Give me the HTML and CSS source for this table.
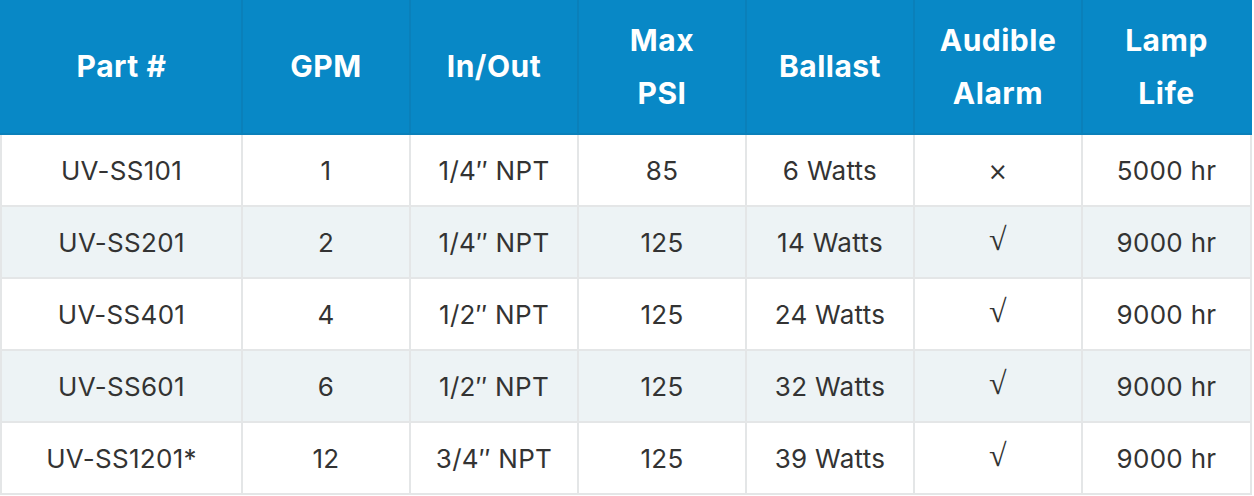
FILE: index.html
```html
<!DOCTYPE html>
<html>
<head>
<meta charset="utf-8">
<link rel="stylesheet" href="styles.css">
</head>
<body>
<table class="spec">
  <colgroup>
    <col class="c-first"><col class="c"><col class="c"><col class="c"><col class="c"><col class="c"><col class="c-last">
  </colgroup>
  <thead>
    <tr>
      <th>Part #</th>
      <th>GPM</th>
      <th>In/Out</th>
      <th>Max<br>PSI</th>
      <th>Ballast</th>
      <th>Audible<br>Alarm</th>
      <th>Lamp<br>Life</th>
    </tr>
  </thead>
  <tbody>
    <tr><td>UV-SS101</td><td>1</td><td>1/4″ NPT</td><td>85</td><td>6 Watts</td><td><span class="cross">×</span></td><td>5000 hr</td></tr>
    <tr><td>UV-SS201</td><td>2</td><td>1/4″ NPT</td><td>125</td><td>14 Watts</td><td><span class="check">√</span></td><td>9000 hr</td></tr>
    <tr><td>UV-SS401</td><td>4</td><td>1/2″ NPT</td><td>125</td><td>24 Watts</td><td><span class="check">√</span></td><td>9000 hr</td></tr>
    <tr><td>UV-SS601</td><td>6</td><td>1/2″ NPT</td><td>125</td><td>32 Watts</td><td><span class="check">√</span></td><td>9000 hr</td></tr>
    <tr><td>UV-SS1201*</td><td>12</td><td>3/4″ NPT</td><td>125</td><td>39 Watts</td><td><span class="check">√</span></td><td>9000 hr</td></tr>
  </tbody>
</table>
</body>
</html>
```
FILE: styles.css
```css
html, body {
  margin: 0;
  padding: 0;
  background: #ffffff;
}
.spec {
  border-collapse: collapse;
  table-layout: fixed;
  width: 1252px;
  font-family: Inter, "Noto Sans", sans-serif;
  color: #333333;
}
.c-first { width: 241px; }
.c { width: 168px; }
.c-last { width: 169px; }
.spec th {
  background: #0888c6;
  color: #ffffff;
  font-weight: 700;
  font-size: 30px;
  letter-spacing: 0.5px;
  line-height: 53px;
  height: 133px;
  padding: 0;
  text-align: center;
  vertical-align: middle;
  border: 2px solid #0a80ba;
  border-top: none;
}
.spec th:first-child { border-left-color: #0888c6; }
.spec th:last-child { border-right-color: #0888c6; }
.spec td {
  font-size: 26px;
  letter-spacing: 0.3px;
  font-weight: 400;
  height: 70px;
  padding: 0;
  text-align: center;
  vertical-align: middle;
  border: 2px solid #e4e6e7;
}
.spec tbody tr:nth-child(even) td {
  background: #edf3f5;
}
.cross {
  font-family: "DejaVu Sans", sans-serif;
  font-weight: 400;
  font-size: 24px;
  color: #333333;
}
.check {
  display: inline-block;
  font-family: "Liberation Serif", serif;
  font-weight: 400;
  font-size: 32px;
  line-height: 36px;
  color: #333333;
  vertical-align: middle;
  position: relative;
  top: -3px;
}
```
